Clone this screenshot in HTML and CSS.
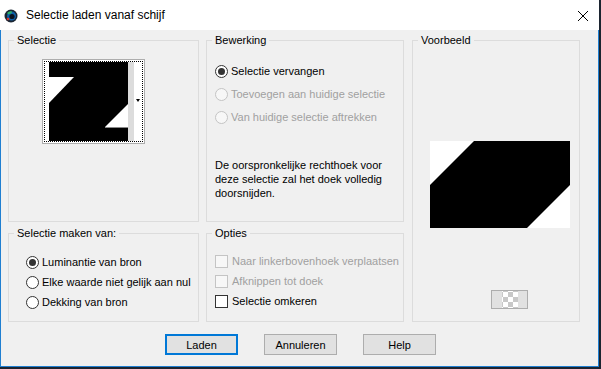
FILE: index.html
```html
<!DOCTYPE html>
<html>

  <head>
    <meta charset="UTF-8">
    <title>Selectie laden vanaf schijf</title>
    <link rel="stylesheet" href="styles.css">
  </head>

  <body>
    <div id="window">
      <div id="titlebar">
        <svg class="appIcon" width="14" height="14" viewBox="0 0 14 14">
          <circle cx="7" cy="7" r="6.5" fill="#1b2633"/>
          <circle cx="7.5" cy="7" r="4.5" fill="#0d5fa8"/>
          <circle cx="8" cy="7.5" r="2.6" fill="#0a1420"/>
          <path d="M3 4 A5 5 0 0 1 8 2.5 L7.5 4.5 A3 3 0 0 0 4.5 5.5 Z" fill="#2fb36b"/>
          <circle cx="4" cy="10" r="1.3" fill="#d6322b"/>
        </svg>
        <span class="title">Selectie laden vanaf schijf</span>
        <svg class="closeIcon" width="12" height="12" viewBox="0 0 12 12">
          <path d="M1 1 L11 11 M11 1 L1 11" stroke="#000" stroke-width="1"/>
        </svg>
      </div>

      <div id="content">
        <div id="groups">

          <div class="group" id="selectie">
            <span class="legend">Selectie</span>
            <div class="thumb">
              <div class="focus">
                <svg class="thumbImage" width="79" height="79" viewBox="0 0 79 79">
                  <rect width="79" height="79" fill="#000"/>
                  <polygon points="0,15 25,15 0,41" fill="#fff"/>
                  <polygon points="79,42 79,65 56,65" fill="#fff"/>
                  <line x1="56" y1="65.5" x2="79" y2="65.5" stroke="#888" stroke-width="1"/>
                </svg>
                <div class="strip"></div>
                <div class="arrowArea"><span class="arrow"></span></div>
              </div>
            </div>
          </div>

          <div class="group" id="bewerking">
            <span class="legend">Bewerking</span>
            <div class="options">
              <div class="option"><span class="radio checked"></span>Selectie vervangen</div>
              <div class="option disabled"><span class="radio"></span>Toevoegen aan huidige selectie</div>
              <div class="option disabled"><span class="radio"></span>Van huidige selectie aftrekken</div>
            </div>
            <p class="note">De oorspronkelijke rechthoek voor<br>deze selectie zal het doek volledig<br>doorsnijden.</p>
          </div>

          <div class="group" id="voorbeeld">
            <span class="legend">Voorbeeld</span>
            <svg class="preview" width="140" height="87" viewBox="0 0 140 87">
              <rect width="140" height="87" fill="#000"/>
              <polygon points="0,0 44,0 0,44" fill="#fff"/>
              <polygon points="140,44 140,87 97,87" fill="#fff"/>
            </svg>
            <div class="checkerButton"><span class="checker"></span></div>
          </div>

          <div class="group" id="bron">
            <span class="legend">Selectie maken van:</span>
            <div class="options">
              <div class="option"><span class="radio checked"></span>Luminantie van bron</div>
              <div class="option"><span class="radio"></span>Elke waarde niet gelijk aan nul</div>
              <div class="option"><span class="radio"></span>Dekking van bron</div>
            </div>
          </div>

          <div class="group" id="opties">
            <span class="legend">Opties</span>
            <div class="options">
              <div class="option disabled"><span class="check"></span>Naar linkerbovenhoek verplaatsen</div>
              <div class="option disabled"><span class="check"></span>Afknippen tot doek</div>
              <div class="option"><span class="check"></span>Selectie omkeren</div>
            </div>
          </div>

        </div>

        <div id="buttons">
          <button class="default">Laden</button>
          <button>Annuleren</button>
          <button>Help</button>
        </div>
      </div>
    </div>
  </body>

</html>
```

FILE: styles.css
```css
html,
body {
  margin: 0;
  background: #1c2430;
}

#window {
  width: 599px;
  height: 367px;
  display: flex;
  flex-direction: column;
  font-family: "Liberation Sans", Arial, sans-serif;
  font-size: 11px;
  color: #000;
}

#titlebar {
  height: 30px;
  flex: none;
  background: #fff;
  display: flex;
  align-items: center;
  font-size: 12px;
  line-height: 28px;
}

.appIcon {
  margin-left: 4px;
  margin-top: 1px;
}

.title {
  margin-left: 8px;
  flex: 1;
}

.closeIcon {
  margin-right: 10px;
  margin-top: 1px;
}

#content {
  flex: 1;
  background: #f0f0f0;
  border: 1px solid #1f7fd1;
  border-top: 0;
  padding: 10px 7px 0 7px;
}

#groups {
  display: grid;
  grid-template-columns: 191px 198px 169px;
  grid-template-rows: 182px 89px;
  column-gap: 7px;
  row-gap: 11px;
}

.group {
  position: relative;
  border: 1px solid #dcdcdc;
}

.legend {
  position: absolute;
  top: -7px;
  left: 5px;
  padding: 0 3px;
  background: #f0f0f0;
  line-height: 13px;
}

#selectie {
  grid-column: 1;
  grid-row: 1;
}

#bewerking {
  grid-column: 2;
  grid-row: 1;
}

#voorbeeld {
  grid-column: 3;
  grid-row: 1 / 3;
  margin-left: 1px;
}

#bron {
  grid-column: 1;
  grid-row: 2;
}

#opties {
  grid-column: 2;
  grid-row: 2;
}

/* selectie thumbnail */
.thumb {
  width: 103px;
  height: 85px;
  box-sizing: border-box;
  margin: 18px 0 0 33px;
  border: 1px solid #adadad;
  background: #fff;
  padding: 1px;
}

.focus {
  height: 81px;
  box-sizing: border-box;
  border: 1px dotted #000;
  display: flex;
  padding-left: 4px;
}

.thumbImage {
  display: block;
}

.strip {
  width: 6px;
  background: #dcdcdc;
}

.arrowArea {
  width: 7px;
  position: relative;
}

.arrow {
  position: absolute;
  left: 2px;
  top: 37px;
  width: 0;
  height: 0;
  border-left: 2px solid transparent;
  border-right: 2px solid transparent;
  border-top: 3px solid #000;
}

/* radio and check lists */
.options {
  display: flex;
  flex-direction: column;
  line-height: 13px;
}

#bewerking .options {
  margin: 24px 0 0 8px;
  gap: 10px;
}

#bron .options {
  margin: 22px 0 0 17px;
  gap: 7px;
}

#opties .options {
  margin: 21px 0 0 8px;
  gap: 7px;
}

.option {
  display: flex;
  align-items: center;
  white-space: nowrap;
}

.option.disabled {
  color: #a0a0a0;
}

.radio {
  width: 13px;
  height: 13px;
  box-sizing: border-box;
  border: 1px solid #333;
  border-radius: 50%;
  background: #fff;
  margin-right: 3px;
  display: flex;
  align-items: center;
  justify-content: center;
}

.radio.checked::after {
  content: "";
  width: 7px;
  height: 7px;
  border-radius: 50%;
  background: #333;
}

.option.disabled .radio {
  border-color: #c4c4c4;
  background: #f7f7f7;
}

.check {
  width: 13px;
  height: 13px;
  box-sizing: border-box;
  border: 1px solid #333;
  background: #fff;
  margin-right: 4px;
}

.option.disabled .check {
  border-color: #c4c4c4;
  background: #f7f7f7;
}

.note {
  margin: 34px 0 0 8px;
  line-height: 14px;
}

/* voorbeeld */
.preview {
  display: block;
  margin: 100px 0 0 17px;
}

.checkerButton {
  width: 37px;
  height: 19px;
  box-sizing: border-box;
  margin: 62px 0 0 78px;
  border: 1px solid #adadad;
  background: #e1e1e1;
  display: flex;
  justify-content: center;
}

.checker {
  width: 16px;
  height: 17px;
  margin-left: 1px;
  background: conic-gradient(#c8c8c8 25%, #fff 0 50%, #c8c8c8 0 75%, #fff 0);
  background-size: 10px 10px;
  background-position: 1px 1px;
}

/* buttons */
#buttons {
  display: flex;
  justify-content: center;
  gap: 26px;
  margin-top: 12px;
  padding-left: 2px;
}

#buttons button {
  width: 73px;
  height: 21px;
  box-sizing: border-box;
  border: 1px solid #adadad;
  background: #e1e1e1;
  font-family: "Liberation Sans", Arial, sans-serif;
  font-size: 11px;
  color: #000;
  padding: 0;
}

#buttons button.default {
  border: 2px solid #0078d7;
}
```
